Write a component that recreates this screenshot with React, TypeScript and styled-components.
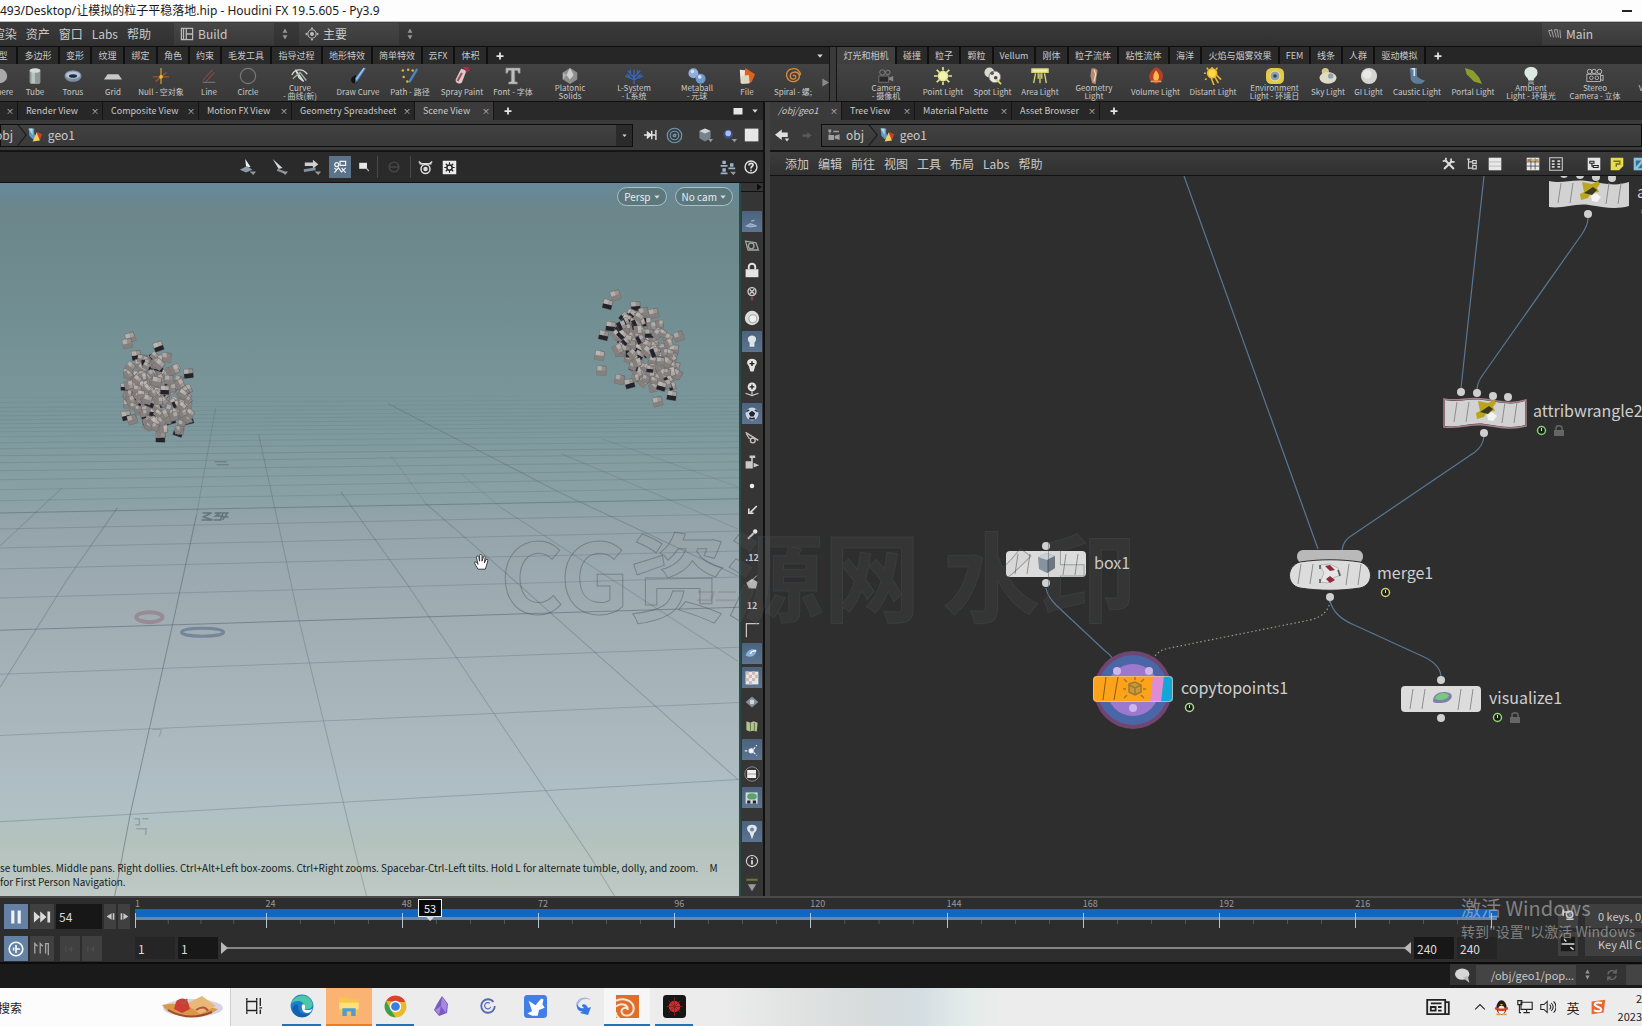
import React from 'react';
import styled, { createGlobalStyle, css } from 'styled-components';

const ui = `"Noto Sans CJK SC", "Noto Sans", sans-serif`;

const Global = createGlobalStyle`
  * { box-sizing: border-box; }
  body { margin: 0; background: #2e2e2e; font-family: ${ui}; color: #c9c9c9; overflow: hidden; }
  button, input, select { font: inherit; color: inherit; border: 0; padding: 0; margin: 0; background: none; border-radius: 0; }
  svg { display: block; flex: none; }
`;

/* ---------- icons ---------- */

type IconProps = { n: string; s?: number };

const W = '#d8d8d8';
const shapes: Record<string, React.ReactNode> = {
  sphere: <circle cx="10" cy="10" r="8" fill="#a9a9a9" />,
  tube: <g><rect x="4" y="2" width="12" height="17" rx="3" fill="#8f9a97" /><rect x="6" y="4" width="4" height="14" fill="#b9c4c0" /><ellipse cx="10" cy="4" rx="6" ry="2.5" fill="#d3dad8" /></g>,
  torus: <g><ellipse cx="10" cy="10" rx="9.500" ry="6.500" fill="#7d8ea3" /><ellipse cx="10" cy="9" rx="8" ry="4" fill="#b4c4d6" /><ellipse cx="10" cy="10" rx="4.500" ry="2" fill="#1f2a3a" /></g>,
  grid: <path d="M4 8h12l4 6H0z" fill="#c8c8c8" />,
  nullobj: <g strokeWidth="1.4"><path d="M10 1v18" stroke="#c9a02c" /><path d="M1 11h18" stroke="#a8522f" /><path d="M4 16L16 6" stroke="#a8522f" /><circle cx="10" cy="11" r="2" fill="#e3be3d" /></g>,
  line: <g fill="none" stroke="#8a4a4a" strokeWidth="1.2"><path d="M3 15L14 3M6 17L16 6" /><path d="M3 17h14" stroke="#777" /></g>,
  circle: <circle cx="10" cy="10" r="8.500" fill="none" stroke="#7b7b7b" strokeWidth="1.200" />,
  curve: <g fill="none" stroke="#d6dcd8" strokeWidth="1.5"><path d="M1 9C4 2 13 1 18 8" /><path d="M5 3l9 13-5-4z" fill="#9db3a8" /><path d="M2 13l8-7 7 9" stroke="#9fb5ab" /></g>,
  draw: <g><path d="M3 12c-2 4 1 7 5 6l3-5-4-4z" fill="#111" /><path d="M19 1l-9 14-3 3 0-6L15 2z" fill="#4d84c4" /><path d="M17 1l-9 13" stroke="#a9cdf1" strokeWidth="1.4" /></g>,
  path: <g><path d="M18 2l-9 15" stroke="#4d84c4" strokeWidth="2.600" /><g fill="#d9b83b"><circle cx="2" cy="4" r="1.4" /><circle cx="8" cy="3" r="1.4" /><circle cx="3" cy="11" r="1.4" /><circle cx="7" cy="16" r="1.4" /><circle cx="13" cy="4" r="1.4" /></g></g>,
  spray: <g><path d="M9 2l6 2-5 13c-2 3-8 1-7-3z" fill="#dfc9cd" /><path d="M9 6l2 1-5 9-2-1z" fill="#a34a58" /><path d="M11 0h6l2 4-4 2z" fill="#a82f47" /></g>,
  font: <path d="M2 1h16v6h-2l-1-3h-3v12l3 1v2H5v-2l3-1V4H5L4 7H2z" fill="#bdbdbd" stroke="#777" strokeWidth=".6" />,
  platonic: <g><path d="M10 1l8 5v8l-8 5-8-5V6z" fill="#8f8f8f" /><path d="M10 1l4 8-4 5-4-5z" fill="#d0d0d0" /><path d="M2 6l4 3-4 5z" fill="#b4b4b4" /></g>,
  lsys: <g stroke="#3765b4" strokeWidth="1.6" fill="none"><path d="M10 19V3M10 12L3 4M10 12l7-8M10 14L0 10M10 14l10-4M6 8V3M14 8V3M2 8l4 3M18 8l-4 3" /></g>,
  meta: <g><circle cx="6" cy="7" r="5.500" fill="#8fb0da" /><circle cx="14" cy="13" r="5.500" fill="#6f9ad0" /><circle cx="5" cy="5" r="2" fill="#d4e4f6" /><circle cx="13" cy="11" r="2" fill="#d4e4f6" /></g>,
  file: <g><path d="M2 3l9 1 1 14H3z" fill="#f1e7d8" /><path d="M8 1l11 7-4 9-8 1z" fill="#e1611f" /><path d="M3 10l9-1 1 9-9 1z" fill="#dcd9c0" /></g>,
  spiral: <path d="M10 10c1-2 4 0 3 2-2 3-7 1-6-3 1-4 8-5 10 0 1 6-6 9-11 6-5-4-4-12 3-13 5-1 9 2 9.500 7" fill="none" stroke="#d98b3d" strokeWidth="1.5" />,
  camera: <g><path d="M2 10h11v7H2z" fill="#2a2a2a" stroke="#777" /><circle cx="6" cy="6" r="3" fill="none" stroke="#888" /><circle cx="12" cy="6" r="2.500" fill="none" stroke="#888" /><path d="M13 12l5-2v6l-5-2" fill="#888" /></g>,
  point: <g stroke="#e6e896" strokeWidth="1.8"><circle cx="10" cy="10" r="5" fill="#f3f4b2" /><path d="M10 0v4M10 16v4M0 10h4M16 10h4M3 3l3 3M14 14l3 3M3 17l3-3M14 6l3-3" /></g>,
  spot: <g><circle cx="6" cy="6" r="5.500" fill="#d9d9cf" /><circle cx="12" cy="11" r="6.500" fill="#e8e8dc" stroke="#777" /><circle cx="9" cy="7" r="2" fill="#555" /><circle cx="13" cy="12" r="2" fill="#444" /><path d="M14 14l5 5" stroke="#d7d86a" strokeWidth="2" /></g>,
  area: <g stroke="#d5d473" strokeWidth="1.500"><path d="M1 2h18v4H1z" fill="#f3efb1" /><path d="M5 7l-2 11M10 7v11M15 7l2 11M8 7v6M12 7v6" /></g>,
  geolight: <g><path d="M7 2c5-2 9 2 6 6l-1 11-4-1-2-8z" fill="#b48a73" /><path d="M10 3l2 5-2 8" stroke="#efd3b8" strokeWidth="1.500" fill="none" /></g>,
  volume: <g><path d="M10 0c7 3 9 9 7 14l-7 5-7-5C1 9 4 4 10 0z" fill="#b5402a" /><path d="M10 4c4 4 4 8 2 11H8c-2-4-1-7 2-11z" fill="#ffb84a" /><path d="M4 15h12v2H4z" fill="#e39b49" /></g>,
  distant: <g stroke="#e9b72c" strokeWidth="1.800"><circle cx="9" cy="7" r="5" fill="#ffd84a" /><path d="M9 0v2M2 7H0M3 1l2 2M15 1l-2 2M3 13l-2 1M8 12l3 8M12 11l4 7M13 8l6 6" /></g>,
  env: <g><rect x="0" y="1" width="20" height="18" rx="6" fill="#e3c94a" /><circle cx="10" cy="10" r="5.500" fill="#8aa0ae" stroke="#f4e9a0" /><circle cx="10" cy="10" r="2" fill="#314556" /></g>,
  sky: <g><circle cx="7" cy="5" r="4" fill="#d9c987" /><ellipse cx="10" cy="12" rx="9.500" ry="6.500" fill="#dedbc8" /><circle cx="13" cy="10" r="3" fill="#8fa2b0" /></g>,
  gi: <g><circle cx="10" cy="10" r="9" fill="#d5d5d1" /><circle cx="8" cy="8" r="5" fill="#e8e8e5" /></g>,
  caustic: <g><path d="M2 1h8v9c3 4 7 4 9 5l-3 3c-7 2-14-1-13-7z" fill="#5f7d9a" /><path d="M4 2h3v8" stroke="#d8e5ef" strokeWidth="1.800" fill="none" /></g>,
  portal: <path d="M1 1l9 3 7 8 3 7-9-3-8-8z" fill="#8d9c2c" />,
  ambient: <g><path d="M10 0c6 0 8 4 7 8-1 3-4 4-4 7H7c0-3-3-4-4-7-1-4 1-8 7-8z" fill="#dbe9e2" /><path d="M7 16h6v3H7z" fill="#888" /></g>,
  stereo: <g fill="none" stroke="#c2c2c2"><rect x="1" y="8" width="15" height="8" fill="#333" /><circle cx="4" cy="5" r="2.500" /><circle cx="9" cy="5" r="2.500" /><circle cx="15" cy="5" r="2.500" /><circle cx="6" cy="12" r="2" /><circle cx="12" cy="12" r="2" /><path d="M16 10l3-1v6l-3-1" /></g>,
  plus: <path d="M10 3v14M3 10h14" stroke="#e6e6e6" strokeWidth="3.500" />,
  down: <path d="M4 7h12l-6 7z" fill={W} />,
  downbig: <path d="M1 5h18l-9 11z" fill={W} />,
  flag: <path d="M5 2v16l12-8z" fill="#0c0c0c" />,
  right: <path d="M3 1v18l15-9z" fill="#8a8a8a" />,
  updown: <path d="M10 1l4 7H6zM10 19l4-7H6z" fill="#969696" />,
  layout: <path d="M2 2h16v16H2zM9 2v16M9 10h9M5 2v16" fill="none" stroke="#b9b9b9" strokeWidth="1.800" />,
  target: <g fill="none" stroke="#bdbdbd" strokeWidth="1.600"><circle cx="10" cy="10" r="6" /><path d="M10 0l2 3H8zM10 20l2-3H8zM0 10l3-2v4zM20 10l-3-2v4z" fill="#bdbdbd" stroke="none" /><circle cx="10" cy="10" r="2" fill="#bdbdbd" /></g>,
  anim: <path d="M1 5l3 9M5 3l3 12M9 4l3 11M13 3l2 12M17 4l1 12M1 5h4M9 4h4" stroke="#a5a5a5" strokeWidth="1.400" fill="none" />,
  geo: <g><path d="M2 2h7v6l3 6-5 1-4-4z" fill="#5d9cc9" /><path d="M2 2h5v8" fill="#b5d7ea" /><path d="M12 6l7 3-3 8-5-1z" fill="#cf3f21" /><path d="M12 7l4 10-9 1z" fill="#f3cf63" /></g>,
  obj: <g fill="#a0a0a0"><path d="M2 2h4v4H2zM9 4h8v2H9zM2 10h8v7H2zM11 11l7-2v8l-7-2z" /><path d="M4 6v4" stroke="#a0a0a0" /></g>,
  pin: <path d="M0 10h10M5 6l5 4-5 4zM11 4v12M11 10h5M17 3v14" fill="#e2e2e2" stroke="#e2e2e2" strokeWidth="2" />,
  rings: <g fill="none" stroke="#7199b1" strokeWidth="1.400"><circle cx="10" cy="10" r="8.500" /><circle cx="10" cy="10" r="5" /><path d="M10 10l2-2" /><circle cx="10" cy="10" r="1.500" /></g>,
  cube: <g><path d="M3 5l7-3 7 3v9l-7 4-7-4z" fill="#76838c" /><path d="M3 5l7-3 7 3-7 3z" fill="#ced6da" /><path d="M14 15h6l-3 4z" fill="#999" /></g>,
  bluedot: <g><circle cx="9" cy="9" r="6" fill="#3d4d85" /><circle cx="9" cy="8" r="3.500" fill="#a9c0ee" /><path d="M13 15h7l-3 4z" fill="#999" /></g>,
  square: <path d="M1 2h17v16H1z" fill="#e6e6e6" />,
  box: <path d="M1 4h18v13H1z" fill="#e6e6e6" />,
  back: <path d="M0 9l9-7v4h8v6H9v4zM13 14h6l-3 4z" fill="#dedede" />,
  fwd: <path d="M18 10l-7-5v3H4v4h7v3z" fill="#5a5a5a" />,
  sel: <g><path d="M8 1l6 9-5 0z" fill="#f0f0f0" /><path d="M2 13l8-4 6 4-7 3z" fill="#8d9aa8" /><path d="M13 15h7l-3 4z" fill="#9a9a9a" /></g>,
  sel2: <g><path d="M3 1l11 10-4 1 2 4z" fill="#d5d8db" /><path d="M8 13l8 3" stroke="#8492a2" strokeWidth="2.500" /><path d="M13 15h7l-3 4z" fill="#9a9a9a" /></g>,
  sel3: <g><path d="M2 5h9V2l6 5-6 5V9H2z" fill="#d0d0d0" /><path d="M1 14l13-2" stroke="#8492a2" strokeWidth="3" /><path d="M13 15h7l-3 4z" fill="#9a9a9a" /></g>,
  snap: <g fill="none" stroke="#f2f2f2" strokeWidth="1.500"><circle cx="6" cy="7" r="2.500" /><path d="M10 3h7v5h-7zM3 17l5-6 4 5 5-5M3 11l3 3M12 11l5 6" /></g>,
  magnet: <g><path d="M2 3h13v10H2z" fill="#e6e6e6" /><path d="M14 12l4 5" stroke="#bbb" strokeWidth="2" /></g>,
  dim: <g fill="none" stroke="#484848" strokeWidth="2"><circle cx="10" cy="10" r="7" /><path d="M3 10h14" /></g>,
  eye: <g fill="none" stroke="#dedede" strokeWidth="2"><circle cx="10" cy="12" r="6" /><circle cx="10" cy="12" r="2" fill="#dedede" /><path d="M1 2l5 4M19 2l-5 4M2 5h16" /></g>,
  gear: <g><path d="M1 1h18v18H1z" fill="#ececec" /><circle cx="10" cy="10" r="3.500" fill="none" stroke="#222" strokeWidth="2" /><path d="M10 3v3M10 14v3M3 10h3M14 10h3M5 5l2 2M15 15l-2-2M5 15l2-2M15 5l-2 2" stroke="#222" strokeWidth="1.500" /></g>,
  people: <g fill="#9fb2cc"><path d="M4 2h4v4H4zM2 7h8v2H2zM4 11h4v4H4zM2 16h8v2H2zM13 5h4v4h-4zM11 10h8v2h-8z" /><path d="M13 15h7l-3 4z" fill="#999" /></g>,
  help: <g fill="none" stroke="#e0e0e0"><circle cx="10" cy="10" r="8.500" strokeWidth="2" /><path d="M7 8c0-4 6-4 6-1 0 2-3 2-3 5M10 14v2" strokeWidth="2.400" /></g>,
  wrench: <g fill="none" stroke="#dcdcdc" strokeWidth="3"><path d="M4 4l13 13M3 17L14 6" /><path d="M1 6l4-1 1-4M13 2v5h5" strokeWidth="2.400" /></g>,
  tree: <path d="M5 2v15M5 7h5M5 16h5M3 3h4M11 5h5v4h-5zM11 12h5v5h-5z" stroke="#d4d4d4" fill="none" strokeWidth="1.700" />,
  list: <g><path d="M1 1h18v18H1z" fill="#e8e8e8" /><path d="M1 7h18M1 13h18" stroke="#aaa" /></g>,
  palette: <g><path d="M1 1h18v18H1z" fill="#e8e8e8" /><path d="M2 3h4v3H2z" fill="#d9643c" /><path d="M8 3h4v3H8z" fill="#d8bf38" /><path d="M14 3h4v3h-4z" fill="#de8a3a" /><path d="M7 2v16M13 2v16M1 7h18M1 13h18" stroke="#333" /></g>,
  table: <g fill="none" stroke="#cfcfcf" strokeWidth="1.500"><path d="M1 1h18v18H1z" /><path d="M4 6h4M4 10h4M4 14h4M12 6h4M12 10h4M12 14h4" strokeWidth="2.500" /></g>,
  netbox: <g><path d="M1 1h18v18H1z" fill="#e5e5e5" /><path d="M4 6h6v3H4zM9 12h7v3H9zM7 9v4h2" fill="none" stroke="#222" strokeWidth="1.500" /></g>,
  note: <g><path d="M1 1h18v12l-6 6H1z" fill="#e8dc4d" /><path d="M5 6h9v4H9v4" stroke="#6e6a26" strokeWidth="2" fill="none" /></g>,
  image: <g><path d="M1 1h18v18H1z" fill="#8cc3e3" /><path d="M4 5h8l-8 9zM14 8v8H7z" fill="#3b6d8d" /></g>,
  lens: <g fill="none" stroke="#9fa5a0" strokeWidth="1.600"><path d="M2 4l13 2 3 9-13 0z" /><circle cx="9" cy="10" r="3.500" /></g>,
  handle: <g fill="none" stroke="#9fb4ca" strokeWidth="1.500"><path d="M3 15l5-3 8 3-8 1z" fill="#88a2bd" /><path d="M9 9l4-1" /></g>,
  lock: <g><path d="M2 9h16v10H2z" fill="#e4e4e4" /><path d="M6 9V6c0-5 8-5 8 0v3" fill="none" stroke="#e4e4e4" strokeWidth="2.400" /></g>,
  nolight: <g fill="none" stroke="#c9c9c9" strokeWidth="1.800"><circle cx="10" cy="7" r="5" /><path d="M7 4l6 6M13 4l-6 6" /><path d="M10 13v5" stroke="#7d4541" strokeWidth="3" /></g>,
  disc: <g><circle cx="10" cy="10" r="9" fill="#d9ded9" /><circle cx="11" cy="11" r="5" fill="#eef1ee" stroke="#8b9690" /></g>,
  bulb: <path d="M10 2c5 0 7 5 3 9v5H7v-5C3 7 5 2 10 2z" fill="#dce6e8" />,
  bulbplus: <g><path d="M10 1c6 0 8 5 4 9l-2 7H8l-2-7C2 6 4 1 10 1z" fill="#e4e4dc" /><path d="M10 4v6M7 7h6" stroke="#222" strokeWidth="1.800" /></g>,
  bulbpath: <g><circle cx="10" cy="6" r="5.500" fill="#e4e4e4" /><path d="M10 3v6M7 6h6" stroke="#222" strokeWidth="1.600" /><path d="M10 11v5M2 14l8 3 8-3" stroke="#ccc" strokeWidth="1.500" fill="none" /></g>,
  ball: <g><circle cx="10" cy="10" r="8" fill="#cdd5e2" /><path d="M10 6l4 3-2 4H8L6 9zM2 8l3-4 2 2zM18 8l-3-4-2 2zM6 17l1-3 3 1 3-1 1 3z" fill="#1d2638" /></g>,
  cut: <g stroke="#c9c4bd" strokeWidth="1.600" fill="none"><path d="M2 3l16 10M3 5l4 6" /><circle cx="11" cy="13" r="3" /></g>,
  robot: <g fill="#c9c9c9"><path d="M2 9h9v9H2zM7 2h7v3H7zM9 5h2v4H9z" /><path d="M12 11l7 3-7 3z" /></g>,
  dot: <circle cx="10" cy="10" r="2.800" fill="#eee" />,
  arrowdl: <path d="M16 5L8 13M6 8v6h6" stroke="#e0e0e0" strokeWidth="2" fill="none" />,
  probe: <g><path d="M5 16l7-7" stroke="#c4c4c4" strokeWidth="2.400" /><circle cx="14" cy="7" r="2.800" fill="#e6e6e6" /></g>,
  poly: <g><path d="M3 11l7-5 7 4-2 8H6z" fill="#b5b5b5" /><path d="M8 10l8-8" stroke="#ddd" /></g>,
  corner: <path d="M3 19V2h16" stroke="#c8c8c8" strokeWidth="1.500" fill="none" />,
  shade: <g><path d="M2 12c2-8 9-9 14-7-1 6-6 11-14 7z" fill="#86b4dd" /><path d="M8 10c2-4 5-4 7-4" stroke="#fff" strokeWidth="2" /></g>,
  check: <g><path d="M2 2h16v16H2z" fill="#e8e8e8" /><path d="M2 2h4v4H2zM10 2h4v4h-4zM6 6h4v4H6zM14 6h4v4h-4zM2 10h4v4H2zM10 10h4v4h-4zM6 14h4v4H6z" fill="#cdb9b5" /></g>,
  diamond: <g><path d="M10 3l8 7-8 7-8-7z" fill="#848d93" /><circle cx="10" cy="10" r="3" fill="#ced7dd" /></g>,
  cloth: <g><path d="M3 4l5 2 4-2 5 2-1 11-5-1-4 1-4-2z" fill="#b0c391" /><path d="M8 6v10M13 6v10" stroke="#56653f" /></g>,
  nodes: <g stroke="#e8edf4" strokeWidth="1.600" fill="none"><circle cx="9" cy="11" r="2.500" fill="#fff" /><path d="M12 9l4-5M12 13l4 4M1 11h4" strokeDasharray="3 2" /></g>,
  film: <g><circle cx="10" cy="10" r="9" fill="none" stroke="#999" /><path d="M4 5h11v10H4z" fill="#f0f0f0" /><path d="M5 10h10" stroke="#888" /></g>,
  scene: <g><path d="M2 3h15v14H2z" fill="#d5dcdd" /><ellipse cx="10" cy="8" rx="6" ry="4" fill="#5ba36a" /><path d="M4 13h4v4H4zM11 13h4v4h-4z" fill="#223" /></g>,
  marker: <g><path d="M10 1c7 0 8 6 3 10l-3 8-3-8C2 7 3 1 10 1z" fill="#dfe6ea" /><circle cx="10" cy="7" r="2.500" fill="#6b87a8" /></g>,
  info: <g fill="none" stroke="#e0e0e0"><circle cx="10" cy="10" r="8" strokeWidth="1.500" /><path d="M10 5v2M10 9v6" strokeWidth="2.500" /></g>,
  more: <g><path d="M2 1h16v3H2z" fill="#6f7a24" /><path d="M4 9h12l-6 10z" fill="#9a9a9a" /></g>,
  pause: <path d="M4 2h4v16H4zM12 2h4v16h-4z" fill="#eef1f6" />,
  next: <path d="M1 4l7 6-7 6zM8 4l7 6-7 6zM16 4h3v12h-3z" fill="#dadada" />,
  stepb: <path d="M12 4v12L3 10zM14 4h3v12h-3z" fill="#c8c8c8" />,
  stepf: <path d="M8 4v12l9-6zM3 4h3v12H3z" fill="#c8c8c8" />,
  clock: <g fill="none" stroke="#fff"><circle cx="10" cy="10" r="8.500" strokeWidth="2" /><path d="M10 5v10M10 10h5M7 8v4" strokeWidth="2" /></g>,
  keys: <path d="M2 15V4l3 3M8 15V4l3 3M14 15V4h3v13" stroke="#a8a8a8" fill="none" strokeWidth="1.400" />,
  keydim: <path d="M4 6v8M8 10h6M12 6v8" stroke="#4c4c4c" fill="none" strokeWidth="2" />,
  bubble: <g><ellipse cx="9" cy="9" rx="9" ry="7" fill="#d6d6d6" /><path d="M10 13l8 7-2-9z" fill="#bbb" /></g>,
  refresh: <path d="M4 9c1-6 10-7 12-2M16 2v5h-5M16 11c-1 6-10 7-12 2M4 18v-5h5" fill="none" stroke="#6a6a6a" strokeWidth="1.800" />,
  scope: <g><path d="M1 1h18v18H1z" fill="#191919" /><path d="M2 10h16M5 4l3 3M13 14l4 3" stroke="#ddd" strokeWidth="1.800" /></g>,
  keyset: <g fill="none" stroke="#ccc" strokeWidth="2"><path d="M3 5h9M4 2v8M8 14h9" /><circle cx="12" cy="8" r="4" /></g>,
  taskview: <path d="M2 5h11v10H2zM2 1v3M13 1v3M2 16v3M13 16v3M17 1v9M17 14v5M16 12h3" fill="none" stroke="#222" strokeWidth="1.500" />,
  edge: <g><circle cx="10" cy="10" r="9.500" fill="#1b7fce" /><path d="M1 8C3 1 14-2 18 6c3 6-4 8-7 6 2-3-1-7-5-6-3 0-5 2-5 2z" fill="#4cc6a5" /><path d="M7 10c-1 6 5 8 10 6-5 6-15 3-15-4 1-4 5-4 5-2z" fill="#1460ad" /><path d="M10 9c3-1 3 2 2 4 3 1 6 0 7-1l-2 3c-4 2-8 0-7-6z" fill="#fff" /></g>,
  folder: <g><path d="M1 2h7l2 2h8v14H1z" fill="#f5c748" /><path d="M1 7h18v6H1z" fill="#ffdf7e" /><path d="M4 19v-7h12v7h-4v-4H8v4z" fill="#4f9bd3" /></g>,
  chrome: <g><circle cx="10" cy="10" r="9.500" fill="#e8b92a" /><path d="M2 5a9.500 9.500 0 0 1 16.500 1H10z" fill="#d8432f" /><path d="M1.800 5.200L6 13l4 6.400A9.500 9.500 0 0 1 1.800 5.200z" fill="#36a155" /><circle cx="10" cy="10" r="5" fill="#fff" /><circle cx="10" cy="10" r="3.800" fill="#3c7ee0" /></g>,
  gem: <g><path d="M11 0l6 8-1 9-8 3-5-6 3-6z" fill="#7a5bc0" /><path d="M11 1l-1 9 5 7 1-9zM4 14l6-4-2 9z" fill="#a58ae0" /></g>,
  cring: <g fill="none" stroke="#5568b4"><circle cx="10" cy="10" r="7.500" strokeWidth="2" strokeDasharray="42 5" /><path d="M12 7a3.500 3.500 0 1 0 1 4" strokeWidth="1.300" /></g>,
  bird: <g><rect x="0" y="0" width="20" height="20" rx="3" fill="#3f7fe6" /><path d="M4 5l6 4 5-6 2 1-1 4 2 3-5 2-1 5-5 0-4-2 4-2z" fill="#fff" /></g>,
  swirl: <g><path d="M18 4C12-1 3 2 3 10l2 1C5 5 11 1 18 4z" fill="#a9b9e6" /><path d="M4 8c-1 6 3 8 6 7l-3 2 8 2 3-8-3 1c-1-4-6-5-6-2l2 2c-3 1-6-1-7-4z" fill="#3877df" /></g>,
  houdini: <g><path d="M0 0h20v20H0z" fill="#dd6f2a" /><path d="M0 5c9-4 17 2 15 9-2 5-9 5-10 1-1-3 3-5 5-3M0 10c5-4 11-1 10 3M0 15c0 2 1 4 3 5" fill="none" stroke="#f6e3d3" strokeWidth="1.800" /></g>,
  rec: <g><rect width="20" height="20" rx="3" fill="#161616" /><circle cx="10" cy="10" r="5" fill="#d62a2e" /><path d="M10 2v16M3 10h14M5 5l10 10M15 5L5 15" stroke="#8d2023" strokeWidth=".8" /></g>,
  news: <g fill="none" stroke="#222" strokeWidth="1.500"><path d="M1 4h15v12H1zM16 6h3v10h-3M4 7h9M10 10h3M10 13h3" /><path d="M4 10h4v3H4z" /></g>,
  chevup: <path d="M2 14l8-8 8 8" fill="none" stroke="#222" strokeWidth="1.800" />,
  penguin: <g><ellipse cx="10" cy="10" rx="6" ry="8.500" fill="#2a1b18" /><ellipse cx="10" cy="13" rx="4" ry="5" fill="#f2efe9" /><path d="M3 9c4 3 10 3 14 0l1 3c-5 3-11 3-16 0z" fill="#d3432b" /><path d="M4 17h5v2H4zM11 17h5v2h-5zM8 6h4l-2 2z" fill="#eda12b" /></g>,
  monitor: <path d="M5 4h14v9H5zM12 13v4M8 17h8M1 2h5v5H1zM3 7v10h2" fill="none" stroke="#222" strokeWidth="1.400" />,
  speaker: <path d="M1 7h4l4-4v14l-4-4H1zM12 7c2 2 2 4 0 6M14 5c3 3 3 7 0 10M17 3c4 4 4 10 0 14" fill="none" stroke="#222" strokeWidth="1.300" />,
  sogou: <g><path d="M2 3l17-2-2 16-15 2z" fill="#e7672d" /><path d="M15 5c-4-1-9-1-9 2s8 3 8 6-6 3-9 1" fill="none" stroke="#fff" strokeWidth="2.600" /></g>,
  hand: <path d="M5 19c-2-4-5-7-4-9 1-1 3 1 4 3L3 4c0-2 2-2 3 0l1 5V2c0-2 2-2 3 0l0 7 2-6c1-1 2-1 2 1l-1 7 2-4c2-1 3 0 2 2-1 5-2 7-3 10z" fill="#fff" stroke="#333" strokeWidth="1.200" />,
};

const Icon = ({ n, s = 16 }: IconProps) => (
  <svg width={s} height={s} viewBox="0 0 20 20" aria-hidden="true">{shapes[n]}</svg>
);

/* ---------- frame ---------- */

const Page = styled.div`
  position: relative;
  display: flex;
  flex-direction: column;
  height: 100vh;
  overflow: hidden;
`;
const TitleBar = styled.header`
  display: flex;
  justify-content: space-between;
  align-items: center;
  height: 22px;
  padding-right: 10px;
  background: #fdfdfd;
  border-bottom: 1px solid #bdbdbd;
  color: #1b1b1b;
  font: 12px/20px "Noto Sans", "Noto Sans CJK SC", sans-serif;
  white-space: nowrap;
`;
const MinButton = styled.button`
  width: 10px;
  height: 2px;
  background: #222;
`;
const MenuBar = styled.nav`
  display: flex;
  align-items: center;
  height: 25px;
  background: linear-gradient(#3b3b3b, #303030);
  border-bottom: 1px solid #0d0d0d;
  font-size: 12px;
`;
const CutMenu = styled.div`
  display: flex;
  justify-content: flex-end;
  width: 151px;
  gap: 9px;
  white-space: nowrap;
`;
const MenuButton = styled.button`
  flex: none;
  line-height: 18px;
  white-space: nowrap;
`;
const DeskPicker = styled.label<{ w: number }>`
  display: flex;
  align-items: center;
  gap: 4px;
  width: ${p => p.w}px;
  height: 22px;
  padding: 0 6px;
  background: linear-gradient(#474747, #393939);
`;
const PickSelect = styled.select`
  appearance: none;
  flex: 1;
  min-width: 0;
  outline: 0;
  line-height: 18px;
`;
const Gap = styled.span<{ w?: number }>`
  flex: ${p => (p.w ? `0 0 ${p.w}px` : '1')};
`;

/* ---------- shelves ---------- */

const Shelves = styled.div`
  display: grid;
  grid-template-columns: minmax(0, 829fr) 8px minmax(0, 805fr);
  height: 55px;
  border-bottom: 1px solid #111;
  background: #222;
`;
const Shelf = styled.section`
  display: flex;
  flex-direction: column;
  overflow: hidden;
`;
const ShelfTabs = styled.div<{ $start: number }>`
  display: flex;
  align-items: center;
  height: 17px;
  margin-left: ${p => Math.min(p.$start, 0)}px;
  background: #262626;
  font-size: 9px;
`;
const ShelfTab = styled.button<{ w: number; $on?: boolean }>`
  flex: 0 0 ${p => p.w}px;
  height: 17px;
  line-height: 17px;
  display: flex;
  justify-content: center;
  white-space: nowrap;
  border-right: 2px solid #101010;
  background: ${p => (p.$on ? '#3f3f3f' : '#2a2a2a')};
`;
const ShelfTools = styled.div<{ $start: number }>`
  display: flex;
  flex: 1;
  background: linear-gradient(#434343, #383838);
  padding-left: ${p => Math.max(p.$start, 0)}px;
  margin-left: ${p => Math.min(p.$start, 0)}px;
`;
const Tool = styled.button<{ w: number }>`
  flex: 0 0 ${p => p.w}px;
  min-width: 0;
  display: flex;
  flex-direction: column;
  align-items: center;
  padding-top: 3px;
`;
const ToolName = styled.span`
  display: flex;
  align-items: center;
  height: 18px;
  margin-top: -2px;
  font-size: 8px;
  line-height: 8px;
  text-align: center;
  white-space: pre;
`;
const MoreTools = styled.button`
  align-self: center;
`;
const Grip = styled.div`
  background: #3a3a3a;
  border: 1px solid #151515;
  border-width: 0 1px;
`;

const leftTabs: [string, number][] = [['模型', 37], ['多边形', 42], ['变形', 32], ['纹理', 33], ['绑定', 33], ['角色', 32], ['约束', 32], ['毛发工具', 50], ['指导过程', 51], ['地形特效', 50], ['简单特效', 50], ['云FX', 32], ['体积', 33]];
const rightTabs: [string, number][] = [['灯光和相机', 60], ['碰撞', 32], ['粒子', 32], ['颗粒', 33], ['Vellum', 42], ['刚体', 33], ['粒子流体', 50], ['粘性流体', 51], ['海洋', 32], ['火焰与烟雾效果', 78], ['FEM', 31], ['线条', 32], ['人群', 32], ['驱动模拟', 51]];
const leftTools: [string, string, number][] = [
  ['Sphere', 'sphere', 38], ['Tube', 'tube', 32], ['Torus', 'torus', 44], ['Grid', 'grid', 36], ['Null - 空对象', 'nullobj', 60], ['Line', 'line', 36], ['Circle', 'circle', 42],
  ['Curve\n- 曲线(新)', 'curve', 62], ['Draw Curve', 'draw', 54], ['Path - 路径', 'path', 50], ['Spray Paint', 'spray', 54], ['Font - 字体', 'font', 48], ['Platonic\nSolids', 'platonic', 66],
  ['L-System\n- L系统', 'lsys', 62], ['Metaball\n- 元球', 'meta', 64], ['File', 'file', 36], ['Spiral - 螺;', 'spiral', 56],
];
const rightTools: [string, string, number][] = [
  ['Camera\n- 摄像机', 'camera', 54], ['Point Light', 'point', 60], ['Spot Light', 'spot', 39], ['Area Light', 'area', 56], ['Geometry\nLight', 'geolight', 52], ['Volume Light', 'volume', 71],
  ['Distant Light', 'distant', 44], ['Environment\nLight - 环境日', 'env', 79], ['Sky Light', 'sky', 28], ['GI Light', 'gi', 53], ['Caustic Light', 'caustic', 44], ['Portal Light', 'portal', 68],
  ['Ambient\nLight - 环境光', 'ambient', 48], ['Stereo\nCamera - 立体', 'stereo', 80], ['VR Cam\n- VR', 'camera', 36],
];

/* ---------- panes ---------- */

const Panes = styled.main`
  flex: 1;
  min-height: 0;
  display: grid;
  grid-template-columns: minmax(0, 763fr) 7px minmax(0, 872fr);
  background: #353535;
`;
const Pane = styled.section`
  position: relative;
  display: flex;
  flex-direction: column;
  min-height: 0;
  min-width: 0;
  overflow: hidden;
`;
const Splitter = styled.div`
  background: #414141;
  border-left: 2px solid #111;
`;
const PaneTabs = styled.div`
  display: flex;
  align-items: center;
  height: 18px;
  background: #292929;
  font-size: 9px;
`;
const PaneTab = styled.div<{ w: number; $on?: boolean; $cut?: boolean }>`
  flex: 0 0 ${p => p.w}px;
  display: flex;
  justify-content: space-between;
  align-items: center;
  height: 18px;
  padding: 0 6px 0 ${p => (p.$cut ? 6 : 8)}px;
  border-right: 1px solid #141414;
  background: ${p => (p.$on ? '#3b3b3b' : '#272727')};
`;
const TabName = styled.button<{ $it?: boolean }>`
  line-height: 18px;
  white-space: nowrap;
  font-style: ${p => (p.$it ? 'italic' : 'normal')};
`;
const CloseX = styled.button`
  width: 5px;
  font-size: 8px;
  line-height: 12px;
`;
const PathBar = styled.div`
  display: flex;
  align-items: center;
  height: 32px;
  background: #3a3a3a;
  border-bottom: 2px solid #141414;
  font-size: 12px;
`;
const PathField = styled.div`
  flex: 1;
  display: flex;
  align-items: center;
  height: 23px;
  border: 1px solid #0e0e0e;
  background: linear-gradient(#414141, #393939);
`;
const PathPart = styled.button<{ w: number }>`
  display: flex;
  align-items: center;
  gap: 5px;
  width: ${p => p.w}px;
  line-height: 18px;
  justify-content: flex-end;
`;
const Chevron = styled.span`
  width: 10px;
  height: 21px;
  margin: 0 6px 0 4px;
  background: #1b1b1b;
  clip-path: polygon(0 0, 15% 0, 100% 50%, 15% 100%, 0 100%, 85% 50%);
`;
const DropBox = styled.button`
  display: grid;
  place-items: center;
  width: 16px;
  height: 21px;
  background: #2a2a2a;
`;
const IconCell = styled.button<{ w: number; $on?: boolean }>`
  display: grid;
  place-items: center;
  flex: 0 0 ${p => p.w}px;
  height: 22px;
  background: ${p => (p.$on ? '#5b728b' : 'none')};
`;
const ViewTools = styled.div`
  display: flex;
  align-items: center;
  height: 31px;
  background: #2a2a2a;
  border-bottom: 1px solid #111;
`;
const Sep = styled.span`
  width: 1px;
  height: 22px;
  background: #4a4a4a;
`;
const NetMenu = styled.nav`
  display: flex;
  align-items: center;
  height: 24px;
  gap: 9px;
  padding-left: 15px;
  margin-right: -5px;
  background: linear-gradient(#3c3c3c, #303030);
  border-bottom: 1px solid #111;
  font-size: 12px;
  overflow: hidden;
`;

/* ---------- scene view ---------- */

const SceneRow = styled.div`
  flex: 1;
  min-height: 0;
  display: flex;
`;
const Scene = styled.div`
  position: relative;
  flex: 1;
  min-width: 0;
  overflow: hidden;
  background: linear-gradient(#66899a 0%, #6c868b 4%, #718e93 18%, #7b979b 32%, #8aa2a6 45%, #94a3aa 47%, #9fadb3 60%, #adbbc1 80%, #b0c0c5 88%, #b4c2bd 92%, #bfc9c5 100%);
  > svg { position: absolute; inset: 0; width: 100%; height: 100%; }
`;
const CamMenus = styled.div`
  position: absolute;
  top: 4px;
  right: 6px;
  display: flex;
  gap: 8px;
`;
const CamButton = styled.button`
  display: flex;
  align-items: center;
  gap: 3px;
  height: 19px;
  padding: 0 6px;
  border: 1px solid #a9c0c4;
  border-radius: 10px;
  background: #5d787d;
  color: #e6eeee;
  font-size: 10px;
  line-height: 17px;
`;
const Hint = styled.p`
  position: absolute;
  left: 0;
  bottom: 7px;
  margin: 0;
  font-size: 10px;
  line-height: 14px;
  color: #141c1c;
  white-space: pre;
`;
const Cursor = styled.span`
  position: absolute;
  left: 474px;
  top: 371px;
`;
const SideBar = styled.div`
  display: flex;
  flex-direction: column;
  align-items: center;
  flex: 0 0 24px;
  background: #353535;
  border-left: 2px solid #2c4a45;
  overflow: hidden;
`;
const SideTop = styled.button`
  flex: none;
  display: flex;
  justify-content: flex-end;
  align-items: center;
  width: 100%;
  height: 9px;
  margin-bottom: 18px;
  border-bottom: 1px solid #111;
`;
const SideButton = styled.button<{ $on?: boolean; $gap?: number }>`
  flex: none;
  display: grid;
  place-items: center;
  width: 20px;
  height: 21px;
  margin: ${p => p.$gap ?? 1}px 0 2px;
  font-size: 9px;
  font-weight: 700;
  line-height: 12px;
  ${p => p.$on && css`background: linear-gradient(#4c637e, #5b748f);`}
`;

const rnd = (seed: number) => () => {
  seed = (seed * 16807) % 2147483647;
  return seed / 2147483647;
};

type Cube = { x: number; y: number; a: number; s: number; d: boolean };
const cluster = (seed: number, cx: number, cy: number, rx: number, ry: number, n: number, tilt: number, dark: number, extra: [number, number][]): Cube[] => {
  const r = rnd(seed);
  const out: Cube[] = extra.map(([x, y]) => ({ x, y, a: r() * 40 - 20, s: 9, d: r() > 0.4 }));
  for (let i = 0; i < n; i++) {
    const t = r() * 6.283;
    const k = Math.sqrt(r()) * (0.85 + r() * 0.3);
    const dx = Math.cos(t) * k * rx;
    out.push({ x: cx + dx, y: cy + Math.sin(t) * k * ry + dx * tilt, a: r() * 90, s: 6 + r() * 3, d: r() < dark });
  }
  return out;
};
const tones = ['#a39e9a', '#928f8d', '#aeaaa6', '#868484', '#9b9591'];
const cubes = [
  ...cluster(77, 157, 211, 32, 35, 200, 0.3, 0.14, [[130, 154], [127, 160], [158, 163], [166, 174], [136, 172], [160, 254], [178, 248], [170, 236], [142, 176], [128, 190], [126, 232], [188, 190], [188, 236], [132, 236]]),
  ...cluster(913, 644, 167, 31, 32, 180, 0.5, 0.26, [[614, 112], [606, 121], [634, 123], [630, 131], [642, 129], [652, 130], [609, 143], [602, 152], [598, 172], [677, 153], [656, 218], [670, 212], [600, 187], [620, 146], [618, 196], [628, 200], [672, 166]]),
];

const rows: [number, number, number][] = [
  [637, 595, 0.3], [551, 518, 0.28], [490, 463, 0.28], [446, 423, 0.5], [414, 393, 0.26], [385, 367, 0.26], [364, 347, 0.26], [345, 330, 0.26], [329, 315, 0.45],
  [317, 304, 0.2], [306, 294, 0.2], [296, 286, 0.2], [287, 278, 0.2], [279, 270, 0.2], [272, 264, 0.22], [265, 258, 0.18], [259, 252, 0.16], [253, 247, 0.15], [248, 243, 0.15], [244, 239, 0.14], [240, 235, 0.14], [236, 231, 0.12], [232, 228, 0.12], [228, 224, 0.1], [224, 220, 0.1], [219, 216, 0.08], [214, 212, 0.06],
];
const rails: [string, number][] = [
  ['M215 225L196 331', 0.25],
  ['M196 331L172 441 130 629 114 713', 0.5],
  ['M0 503L33 450 66 397 117 324', 0.35],
  ['M0 362L62 304', 0.25],
  ['M258 251L274 324 298 435 356 674 366 713', 0.32],
  ['M340 308L406 400 590 674 614 713', 0.32],
  ['M425 320L500 385 736 595', 0.32],
  ['M500 324L736 477', 0.25],
  ['M387 220L557 308 736 392', 0.35],
  ['M390 272L425 320', 0.15],
  ['M460 290L500 324', 0.15],
  ['M560 270L736 345', 0.2],
  ['M600 255L736 303', 0.16],
];

const SceneDrawing = () => (
  <svg viewBox="0 0 737 713" preserveAspectRatio="xMinYMin slice" aria-hidden="true">
    <g fill="none" stroke="#4d5c68">
      {rows.map(([a, b, o]) => <path key={a} d={`M0 ${a}L737 ${b}`} strokeOpacity={o} />)}
      {rails.map(([d, o]) => <path key={d} d={d} strokeOpacity={o} />)}
    </g>
    <g fill="none">
      <ellipse cx="149" cy="433" rx="13" ry="5" stroke="#93707c" strokeWidth="4" opacity=".55" />
      <ellipse cx="202" cy="448" rx="21" ry="4" stroke="#5a6a88" strokeWidth="3" opacity=".6" />
      <path d="M201 336h11l-9-3 8-4h-9M214 329h6l-5 3h6l-1 4h-7M222 336l5-7h-5v4h6" stroke="#4f6066" strokeWidth="1.500" opacity=".7" />
      <path d="M214 278h12M216 281h12" stroke="#4f6066" opacity=".6" />
      <path d="M134 634h5v6h-4M142 634h6M136 644h10l-1 6" stroke="#70839a" strokeWidth="1.500" opacity=".5" />
      <path d="M152 545h9l-2 7" stroke="#70839a" opacity=".5" />
      <path d="M696 408h16l-3 8h-14M716 408h18M714 416h20" stroke="#93707c" strokeWidth="2" opacity=".35" />
    </g>
    {cubes.map((c, i) => {
      const h = c.s / 2;
      return (
        <g key={i} transform={`translate(${c.x} ${c.y}) rotate(${c.a})`}>
          <path d={`M${-h} ${-h}h${c.s}v${c.s}h${-c.s}z`} fill={tones[i % 5]} stroke="#666262" strokeWidth=".6" />
          <path d={`M${-h} ${h}h${c.s}v${-h}h${-c.s}z`} fill={c.d ? '#23232c' : '#85807d'} />
          <path d={`M${-h} ${-h}h${h}v${h}h${-h}z`} fill="#c4c0bd" fillOpacity=".6" />
        </g>
      );
    })}
  </svg>
);

const sideIcons: [string, boolean?][] = [
  ['handle', true], ['lens'], ['lock'], ['nolight'], ['disc'], ['bulb', true], ['bulbplus'], ['bulbpath'], ['ball', true], ['cut'], ['robot'], ['dot'], ['arrowdl'],
  ['probe'], ['.12'], ['poly'], ['12'], ['corner'], ['shade', true], ['check', true], ['diamond'], ['cloth'], ['nodes', true], ['film'], ['scene', true],
];

/* ---------- network ---------- */

const Network = styled.div`
  position: relative;
  flex: 1;
  min-height: 0;
  overflow: hidden;
  background: #2e2e2e;
`;
const Wires = styled.svg`
  position: absolute;
  left: 0;
  top: 0;
`;
const NodeBox = styled.div<{ $x: number; $y: number }>`
  position: absolute;
  left: ${p => p.$x}px;
  top: ${p => p.$y}px;
  display: flex;
  align-items: center;
  height: 26px;
  gap: 8px;
  color: #cfcfcf;
  font-size: 16px;
  line-height: 24px;
`;
const NodeBody = styled.svg`
  overflow: visible;
`;
const NodeText = styled.div`
  position: relative;
  margin-bottom: 4px;
`;
const Badges = styled.div`
  position: absolute;
  left: 3px;
  top: 27px;
  display: flex;
  align-items: center;
  gap: 7px;
`;

type NodeKind = 'flat' | 'wave' | 'merge' | 'copy';
type NodeDef = { name: string; x: number; y: number; kind: NodeKind; icon: string; ring?: string; lock?: boolean; sel?: boolean; top: [number, number][]; bottom: [number, number] };
const nodes: NodeDef[] = [
  { name: 'attribwrangle1', x: 779, y: 4, kind: 'wave', icon: 'python', ring: '#555', lock: true, top: [[15, -6], [31, -5], [47, -3], [63, -2]], bottom: [39, 34] },
  { name: 'attribwrangle2', x: 675, y: 223, kind: 'wave', icon: 'python', ring: '#7ed36a', lock: true, sel: true, top: [[16, -7], [32, -6], [48, -3], [63, -2]], bottom: [39, 34] },
  { name: 'merge1', x: 519, y: 385, kind: 'merge', icon: 'merge', ring: '#c9cf6a', top: [], bottom: [41, 36] },
  { name: 'box1', x: 236, y: 375, kind: 'flat', icon: 'box', top: [[40, -5]], bottom: [40, 32] },
  { name: 'copytopoints1', x: 323, y: 500, kind: 'copy', icon: 'copy', ring: '#a6e08c', top: [[24, -5], [56, -5]], bottom: [40, 32] },
  { name: 'visualize1', x: 631, y: 510, kind: 'flat', icon: 'vis', ring: '#8fd86a', lock: true, top: [[40, -6]], bottom: [40, 32] },
];

const nodeArt: Record<string, React.ReactNode> = {
  python: <g><path d="M33 2l10 2 6-3 2 3-3 4 2 4-8 1-3 5-7 2-1-6 4-2z" fill="#b9a51f" /><path d="M35 13l9-6 4 3-5 5z" fill="#3c3a1c" /><path d="M42 16l5-3 5 4-4 5-5-1z" fill="#f4f4f4" /></g>,
  merge: <g fill="none"><path d="M31 4l4 8-4 9 8 1 5-5 8-3-3-7-8-4z" fill="#e6e6e6" stroke="#aaa" strokeWidth=".8" /><path d="M36 5l5-1 5 5-5 1zM37 18l4-3 5 4-5 3z" fill="#8d2c38" /><path d="M31 4v4M31 18v4M49 9l2 6" stroke="#555" strokeWidth="1.500" /></g>,
  box: <g><path d="M32 6l8-4 9 3v12l-8 5-8-4z" fill="#8794a0" /><path d="M32 6l8-4 9 3-8 4z" fill="#c8d0d6" /><path d="M41 9l8-4v12l-8 5z" fill="#69757f" /></g>,
  copy: <g fill="none" stroke="#a0792f" strokeWidth="1.500"><path d="M36 8l6-2 6 3v7l-6 3-6-3z" fill="#c99a3c" /><path d="M36 9l6 3 6-3M42 12v7" /><path d="M31 3l3 3M51 3l-3 3M31 22l3-3M51 22l-3-3M42 1v3M30 13h3M50 13h3" /></g>,
  vis: <g><path d="M32 15c0-9 12-11 18-7 3 4-3 9-10 9-5 0-8 0-8-2z" fill="#7d80a8" /><path d="M34 13c1-6 10-8 14-4-1 5-9 6-14 4z" fill="#79c97c" /></g>,
};

const NodeView = ({ d }: { d: NodeDef }) => {
  const h = 26;
  const wave = 'M0 1C14 4 22-1 38 1S66 7 80 2V26C66 30 54 27 40 25S14 29 0 27z';
  const body =
    d.kind === 'wave' ? <path d={wave} fill="#d2d2d2" /> :
    d.kind === 'merge' ? <g><rect x="8" y="-11" width="66" height="13" rx="6" fill="#b9b9b9" /><path d="M11 1C31-2 51-2 71 1 85 5 85 24 71 27 51 30 31 30 11 27-3 24-3 5 11 1z" fill="#dcdcdc" stroke="#2e2e2e" /></g> :
    d.kind === 'copy' ? (
      <g>
        <circle cx="40" cy="14" r="39" fill="#70456f" /><circle cx="40" cy="14" r="35" fill="#4a66a6" /><circle cx="40" cy="14" r="26" fill="#9c78cf" />
        <rect width="80" height="26" rx="4" fill="#fca31a" /><path d="M60 0h11l-3 26H57z" fill="#e08bd6" /><path d="M71 0h5q4 0 4 4v18q0 4-4 4h-8z" fill="#12a5dc" />
        <rect x=".5" y=".5" width="79" height="25" rx="4" fill="none" stroke="#e8c9a0" strokeOpacity=".7" />
      </g>
    ) : <rect width="80" height="26" rx="4" fill="#dcdcdc" />;
  return (
    <NodeBox $x={d.x} $y={d.y}>
      <NodeBody width="80" height={h} viewBox={`0 0 80 ${h}`} aria-hidden="true">
        {body}
        {d.sel && <path d="M-1 0C13 3 22-2 38 0S66 6 81 1V27C66 31 54 28 40 26S14 30-1 28z" fill="none" stroke="#a8808c" strokeWidth="1.500" />}
        <g stroke={d.kind === 'copy' ? '#8b5a14' : '#8d8d8d'}>
          <path d={d.kind === 'copy' ? 'M13 1L10 24M25 1L21 24' : 'M12 3L9 23M24 3L21 23M60 3L57 24M72 3L69 24'} />
        </g>
        {nodeArt[d.icon]}
        {[...d.top, d.bottom].map(([x, y]) => <circle key={`${x}${y}`} cx={x} cy={y} r="4" fill={d.kind === 'copy' ? '#cdb6ea' : '#cfcfcf'} />)}
      </NodeBody>
      <NodeText>
        {d.name}
        {d.ring && (
          <Badges>
            <svg width="11" height="11" viewBox="0 0 11 11" aria-hidden="true"><circle cx="5.500" cy="5.500" r="4" fill="#1c1c1c" stroke={d.ring} strokeWidth="1.500" /><path d="M5.500 3v3" stroke="#ddd" /></svg>
            {d.lock && <svg width="10" height="11" viewBox="0 0 10 11" aria-hidden="true"><path d="M0 5h10v6H0z" fill="#666" /><path d="M2 5V3c0-3 6-3 6 0v2" fill="none" stroke="#666" strokeWidth="1.500" /></svg>}
          </Badges>
        )}
      </NodeText>
    </NodeBox>
  );
};

/* ---------- timeline ---------- */

const TimePanel = styled.section`
  display: grid;
  grid-template-columns: 135px minmax(0, 1362fr) 84px 61px;
  height: 68px;
  border-top: 2px solid #4a4a4a;
  border-bottom: 2px solid #0c0c0c;
  background: #2d2d2d;
`;
const Transport = styled.div`
  display: flex;
  flex-direction: column;
  gap: 7px;
  padding: 6px 0 0 4px;
`;
const TRow = styled.div`
  display: flex;
  align-items: stretch;
  height: 25px;
  gap: 2px;
`;
const TButton = styled.button<{ w: number; $on?: boolean }>`
  display: grid;
  place-items: center;
  width: ${p => p.w}px;
  min-height: 24px;
  background: ${p => (p.$on ? '#6480a5' : '#404040')};
`;
const Num = styled.input<{ w: number; $flat?: boolean }>`
  width: ${p => p.w}px;
  min-height: 22px;
  padding-left: 3px;
  background: ${p => (p.$flat ? '#252525' : '#171717')};
  color: #dcdcdc;
  font-size: 12px;
`;
const Track = styled.div`
  display: flex;
  flex-direction: column;
  min-width: 0;
`;
const Ruler = styled.div`
  position: relative;
  display: flex;
  height: 39px;
`;
const Segment = styled.div<{ $n: number }>`
  flex: ${p => p.$n} 1 0;
  min-width: 0;
  font-size: 9px;
  line-height: 11px;
  color: #989898;
  white-space: nowrap;
  &::before {
    content: "";
    display: inline-block;
    height: 11px;
    vertical-align: top;
  }
  &::after {
    content: "";
    display: block;
    height: 19px;
    background:
      linear-gradient(#b4c4d4, #b4c4d4) 0 4px / 1px 15px no-repeat,
      linear-gradient(#1465be 0 8px, #6789a9 8px 11px, transparent 11px) 0 0 / 100% 100%,
      linear-gradient(90deg, #555 1px, transparent 1px) 0 10px / ${p => (p.$n > 2 ? '25%' : '100%')} 5px repeat-x;
  }
`;
const Playhead = styled.output`
  position: absolute;
  left: ${(52 / 240) * 100}%;
  top: 1px;
  display: grid;
  place-items: center;
  width: 24px;
  height: 18px;
  margin-left: -12px;
  border: 1px solid #f0f0f0;
  background: #0b0b0b;
  color: #f0f0f0;
  font-size: 11px;
  line-height: 14px;
  &::after {
    content: "";
    position: absolute;
    top: 16px;
    left: 6px;
    width: 10px;
    height: 5px;
    background: #d0d8e0;
    clip-path: polygon(0 0, 100% 0, 50% 100%);
  }
`;
const RangeRow = styled.div`
  display: flex;
  align-items: center;
  height: 22px;
  gap: 3px;
`;
const RangeBox = styled.div`
  flex: 1;
  display: grid;
  align-items: center;
  height: 14px;
  background: linear-gradient(#858585, #858585) center / calc(100% - 12px) 2px no-repeat;
`;
const RangeInput = styled.input<{ $end?: boolean }>`
  grid-area: 1 / 1;
  appearance: none;
  width: 100%;
  height: 14px;
  pointer-events: none;
  &::-webkit-slider-thumb {
    appearance: none;
    pointer-events: auto;
    width: 7px;
    height: 12px;
    background: #b9b9b9;
    clip-path: ${p => (p.$end ? 'polygon(100% 0, 100% 100%, 0 50%)' : 'polygon(0 0, 100% 50%, 0 100%)')};
  }
`;
const KeyTools = styled.div`
  display: flex;
  flex-direction: column;
  align-items: flex-end;
  gap: 4px;
  padding: 6px 3px 0 0;
`;
const KeyTexts = styled(KeyTools)`
  align-items: stretch;
  padding: 6px 0 0 4px;
  overflow: hidden;
`;
const KeyButton = styled.button`
  height: 24px;
  padding-left: 13px;
  background: #3f3f3f;
  font-size: 11px;
  line-height: 22px;
  text-align: left;
  white-space: nowrap;
`;
const StatusBar = styled.div`
  display: flex;
  align-items: flex-start;
  justify-content: flex-end;
  height: 24px;
  background: #1a1a1a;
  font-size: 11px;
`;
const StatusTools = styled.div`
  display: flex;
  align-items: center;
  width: 192px;
  height: 21px;
  background: #333;
`;
const CookButton = styled.button`
  flex: none;
  width: 100px;
  height: 20px;
  padding-left: 15px;
  background: #444;
  text-align: left;
  line-height: 18px;
`;

/* ---------- taskbar ---------- */

const Taskbar = styled.footer`
  display: flex;
  align-items: stretch;
  height: 38px;
  background: linear-gradient(90deg, #ececec 0 44%, #e2e3e3 48%, #d6dbdc 53%, #d4dde2 56%, #e4ecea 59%, #ececec 61%);
  color: #222;
`;
const SearchBox = styled.div`
  display: flex;
  align-items: center;
  justify-content: space-between;
  width: 231px;
  padding-right: 6px;
  background: #fcfcfc;
  border-right: 1px solid #d0d0d0;
`;
const SearchInput = styled.input`
  width: 40px;
  margin-left: -2px;
  font-size: 12px;
  color: #222;
  &::placeholder { color: #222; opacity: 1; }
`;
const TaskButton = styled.button<{ w: number; $bar?: string; $bg?: string }>`
  display: grid;
  place-items: center;
  width: ${p => p.w}px;
  padding-bottom: 2px;
  background: ${p => p.$bg ?? 'none'};
  box-shadow: ${p => (p.$bar ? `inset 0 -2px ${p.$bar}` : 'none')};
`;
const Tray = styled.div`
  display: flex;
  align-items: center;
  gap: 7px;
  width: 216px;
  font-size: 13px;
`;
const InputMode = styled.button`
  flex: none;
  width: 20px;
  text-align: center;
`;
const Clock = styled.time`
  flex: none;
  display: flex;
  flex-direction: column;
  align-items: flex-end;
  margin-left: 4px;
  width: 25px;
  font-size: 11px;
  line-height: 18px;
`;

/* ---------- overlays ---------- */

const Watermark = styled.div`
  position: absolute;
  left: 500px;
  top: 502px;
  font: 700 97px/140px ${ui};
  white-space: pre;
  color: rgba(150, 150, 150, 0.07);
  -webkit-text-stroke: 1px rgba(70, 78, 82, 0.42);
  pointer-events: none;
`;
const Activate = styled.div`
  position: absolute;
  right: 0;
  bottom: 84px;
  width: 181px;
  color: rgba(215, 215, 215, 0.5);
  font-size: 14px;
  line-height: 22px;
  white-space: nowrap;
  pointer-events: none;
  strong { display: block; font-size: 20px; line-height: 25px; font-weight: 400; }
`;

const ShelfView = ({ tabs, tools, start, on }: { tabs: [string, number][]; tools: [string, string, number][]; start: number; on?: boolean }) => (
  <Shelf>
    <ShelfTabs $start={start}>
      {tabs.map(([t, w], i) => <ShelfTab key={t} w={w} $on={on && i === 0}>{t}</ShelfTab>)}
      <IconCell w={24} aria-label="Add shelf"><Icon n="plus" s={10} /></IconCell>
      {!on && <><Gap /><IconCell w={18} aria-label="Shelf menu"><Icon n="downbig" s={6} /></IconCell></>}
    </ShelfTabs>
    <ShelfTools $start={start}>
      {tools.map(([t, ic, w]) => (
        <Tool key={t} w={w}><Icon n={ic} s={18} /><ToolName>{t}</ToolName></Tool>
      ))}
      {!on && <MoreTools aria-label="More tools"><Icon n="right" s={9} /></MoreTools>}
    </ShelfTools>
  </Shelf>
);

const Tab = ({ t, w, on, it }: { t: string; w: number; on?: boolean; it?: boolean }) => (
  <PaneTab w={w} $on={on}><TabName $it={it}>{t}</TabName><CloseX aria-label={`Close ${t}`}>×</CloseX></PaneTab>
);

export default function App() {
  return (
    <Page>
      <Global />
      <TitleBar>
        <span>493/Desktop/让模拟的粒子平稳落地.hip - Houdini FX 19.5.605 - Py3.9</span>
        <MinButton aria-label="Minimize" />
      </TitleBar>
      <MenuBar>
        <CutMenu>
          {['渲染', '资产', '窗口', 'Labs', '帮助'].map(m => <MenuButton key={m}>{m}</MenuButton>)}
        </CutMenu>
        <Gap w={23} />
        <DeskPicker w={100}><Icon n="layout" s={14} /><PickSelect aria-label="Desktop"><option>Build</option></PickSelect></DeskPicker>
        <IconCell w={22} aria-label="Cycle desktop"><Icon n="updown" s={12} /></IconCell>
        <Gap w={3} />
        <DeskPicker w={100}><Icon n="target" s={14} /><PickSelect aria-label="Radial menu"><option>主要</option></PickSelect></DeskPicker>
        <IconCell w={22} aria-label="Cycle radial menu"><Icon n="updown" s={12} /></IconCell>
        <Gap />
        <DeskPicker w={100}><Icon n="anim" s={14} /><PickSelect aria-label="Take"><option>Main</option></PickSelect></DeskPicker>
      </MenuBar>
      <Shelves>
        <ShelfView tabs={leftTabs} tools={leftTools} start={-19} />
        <Grip />
        <ShelfView tabs={rightTabs} tools={rightTools} start={22} on />
      </Shelves>
      <Panes>
        <Pane>
          <PaneTabs>
            <PaneTab w={17} $cut><CloseX aria-label="Close tab">×</CloseX></PaneTab>
            <Tab t="Render View" w={85} />
            <Tab t="Composite View" w={96} />
            <Tab t="Motion FX View" w={93} />
            <Tab t="Geometry Spreadsheet" w={123} />
            <Tab t="Scene View" w={79} on />
            <IconCell w={28} aria-label="New tab"><Icon n="plus" s={10} /></IconCell>
            <Gap />
            <IconCell w={18} aria-label="Maximize pane"><Icon n="box" s={10} /></IconCell>
            <IconCell w={16} aria-label="Pane menu"><Icon n="downbig" s={6} /></IconCell>
          </PaneTabs>
          <PathBar>
            <PathField>
              <PathPart w={12}>obj</PathPart>
              <Chevron />
              <PathPart w={42}><Icon n="geo" />geo1</PathPart>
              <Gap />
              <DropBox aria-label="Path history"><Icon n="down" s={7} /></DropBox>
            </PathField>
            <Gap w={6} />
            <IconCell w={24} aria-label="Pin"><Icon n="pin" s={14} /></IconCell>
            <IconCell w={22} aria-label="Link"><Icon n="rings" s={17} /></IconCell>
            <Gap w={8} />
            <IconCell w={24} aria-label="Shading"><Icon n="cube" /></IconCell>
            <IconCell w={24} aria-label="Light"><Icon n="bluedot" /></IconCell>
            <IconCell w={22} aria-label="Background"><Icon n="square" /></IconCell>
          </PathBar>
          <ViewTools>
            <Gap w={231} />
            <IconCell w={32} aria-label="Select"><Icon n="sel" s={18} /></IconCell>
            <IconCell w={32} aria-label="Lasso"><Icon n="sel2" s={18} /></IconCell>
            <IconCell w={34} aria-label="Move"><Icon n="sel3" s={18} /></IconCell>
            <IconCell w={22} $on aria-label="Snap"><Icon n="snap" /></IconCell>
            <IconCell w={26} aria-label="Magnet"><Icon n="magnet" s={12} /></IconCell>
            <Sep />
            <IconCell w={32} aria-label="Construction plane"><Icon n="dim" s={14} /></IconCell>
            <Sep />
            <IconCell w={28} aria-label="Visibility"><Icon n="eye" s={15} /></IconCell>
            <IconCell w={20} aria-label="Options"><Icon n="gear" s={15} /></IconCell>
            <Gap />
            <IconCell w={24} aria-label="Display"><Icon n="people" s={17} /></IconCell>
            <IconCell w={24} aria-label="Help"><Icon n="help" s={14} /></IconCell>
          </ViewTools>
          <SceneRow>
            <Scene>
              <SceneDrawing />
              <CamMenus>
                <CamButton>Persp<Icon n="downbig" s={6} /></CamButton>
                <CamButton>No cam<Icon n="downbig" s={6} /></CamButton>
              </CamMenus>
              <Cursor><Icon n="hand" s={16} /></Cursor>
              <Hint>{'se tumbles. Middle pans. Right dollies. Ctrl+Alt+Left box-zooms. Ctrl+Right zooms. Spacebar-Ctrl-Left tilts. Hold L for alternate tumble, dolly, and zoom.     M\nfor First Person Navigation.'}</Hint>
            </Scene>
            <SideBar>
              <SideTop aria-label="Collapse"><Icon n="flag" s={8} /></SideTop>
              {sideIcons.map(([n, on], i) => (
                <SideButton key={i} $on={on} aria-label={n}>{shapes[n] ? <Icon n={n} /> : n}</SideButton>
              ))}
              <SideButton $on $gap={11} aria-label="marker"><Icon n="marker" /></SideButton>
              <SideButton $gap={6} aria-label="info"><Icon n="info" s={14} /></SideButton>
              <SideButton aria-label="More"><Icon n="more" s={14} /></SideButton>
            </SideBar>
          </SceneRow>
        </Pane>
        <Splitter />
        <Pane>
          <PaneTabs>
            <Tab t="/obj/geo1" w={72} on it />
            <Tab t="Tree View" w={73} />
            <Tab t="Material Palette" w={97} />
            <Tab t="Asset Browser" w={88} />
            <IconCell w={28} aria-label="New tab"><Icon n="plus" s={10} /></IconCell>
          </PaneTabs>
          <PathBar>
            <IconCell w={24} aria-label="Back"><Icon n="back" s={15} /></IconCell>
            <IconCell w={24} aria-label="Forward"><Icon n="fwd" s={13} /></IconCell>
            <Gap w={3} />
            <PathField>
              <PathPart w={42}><Icon n="obj" s={14} />obj</PathPart>
              <Chevron />
              <PathPart w={43}><Icon n="geo" />geo1</PathPart>
            </PathField>
          </PathBar>
          <NetMenu>
            {['添加', '编辑', '前往', '视图', '工具', '布局', 'Labs', '帮助'].map(m => <MenuButton key={m}>{m}</MenuButton>)}
            <Gap />
            <Icon n="wrench" s={14} /><Icon n="tree" s={14} /><Icon n="list" s={14} /><Gap w={6} />
            <Icon n="palette" s={14} /><Icon n="table" s={14} /><Gap w={6} />
            <Icon n="netbox" s={14} /><Icon n="note" s={14} /><Icon n="image" s={14} />
          </NetMenu>
          <Network>
            <Wires width="872" height="720" viewBox="0 0 872 720" aria-hidden="true">
              <g fill="none" stroke="#587794" strokeWidth="1.200">
                <path d="M414 0L548 373" />
                <path d="M714 0L691 212" />
                <path d="M818 42Q818 49 812 58L712 200Q707 207 707 214" />
                <path d="M714 260Q713 270 705 276L584 358Q573 364 572 374" />
                <path d="M276 412Q277 420 286 429L334 474Q345 482 347 492" />
                <path d="M560 425Q564 440 582 448L652 480Q670 488 671 500" />
                <path d="M560 425Q558 440 540 444L400 472Q384 474 381 490" stroke="#9a9a8c" strokeDasharray="1.500 2.500" />
              </g>
            </Wires>
            {nodes.map(d => <NodeView key={d.name} d={d} />)}
          </Network>
        </Pane>
      </Panes>
      <TimePanel>
        <Transport>
          <TRow>
            <TButton w={24} $on aria-label="Pause"><Icon n="pause" /></TButton>
            <TButton w={24} aria-label="Last frame"><Icon n="next" s={18} /></TButton>
            <Num w={46} aria-label="Current frame" defaultValue="54" />
            <TButton w={12} aria-label="Step back"><Icon n="stepb" s={11} /></TButton>
            <TButton w={12} aria-label="Step forward"><Icon n="stepf" s={11} /></TButton>
          </TRow>
          <TRow>
            <TButton w={24} $on aria-label="Real time"><Icon n="clock" /></TButton>
            <TButton w={24} aria-label="Frame range"><Icon n="keys" s={18} /></TButton>
            <Gap w={2} />
            <TButton w={20} aria-label="Previous key"><Icon n="keydim" s={14} /></TButton>
            <TButton w={20} aria-label="Next key"><Icon n="keydim" s={14} /></TButton>
          </TRow>
        </Transport>
        <Track>
          <Ruler>
            {['1', '24', '48', '72', '96', '120', '144', '168', '192', '216', ''].map((t, i) => (
              <Segment key={i} $n={i === 0 ? 23 : i === 10 ? 1 : 24}>{t}</Segment>
            ))}
            <Playhead>53</Playhead>
          </Ruler>
          <RangeRow>
            <Num w={40} $flat aria-label="Start frame" defaultValue="1" />
            <Num w={40} aria-label="Range start" defaultValue="1" />
            <RangeBox>
              <RangeInput type="range" min={1} max={240} defaultValue={1} aria-label="Playback start" />
              <RangeInput type="range" min={1} max={240} defaultValue={240} aria-label="Playback end" $end />
            </RangeBox>
            <Num w={40} aria-label="Range end" defaultValue="240" />
            <Num w={40} $flat aria-label="End frame" defaultValue="240" />
          </RangeRow>
        </Track>
        <KeyTools>
          <TButton w={20} aria-label="Set key"><Icon n="keyset" s={16} /></TButton>
          <TButton w={20} aria-label="Scope"><Icon n="scope" s={16} /></TButton>
        </KeyTools>
        <KeyTexts>
          <KeyButton>0 keys, 0/0 channels</KeyButton>
          <KeyButton>Key All Channels</KeyButton>
        </KeyTexts>
      </TimePanel>
      <StatusBar>
        <StatusTools>
          <IconCell w={26} aria-label="Messages"><Icon n="bubble" /></IconCell>
          <CookButton>/obj/geo1/pop...</CookButton>
          <IconCell w={22} aria-label="Cycle update"><Icon n="updown" s={11} /></IconCell>
          <IconCell w={28} aria-label="Recook"><Icon n="refresh" s={14} /></IconCell>
          <CookButton aria-label="Update mode" />
        </StatusTools>
      </StatusBar>
      <Taskbar>
        <SearchBox>
          <SearchInput aria-label="搜索" placeholder="搜索" />
          <svg width="64" height="26" viewBox="0 0 64 26" aria-hidden="true">
            <ellipse cx="33" cy="14" rx="30" ry="9" fill="#d8d3e6" />
            <path d="M2 11c12-2 28-2 56 4-8 8-44 14-56-4z" fill="#d9974a" />
            <path d="M26 10l16-8 14 10-16 8z" fill="#e7b877" />
            <path d="M16 8c4-5 10-4 12 0l2 7-8 4-8-4z" fill="#cf3b35" />
            <path d="M8 16c14 8 30 8 44 2" stroke="#9c4a27" strokeWidth="2" fill="none" />
            <path d="M36 16c6-4 10-3 12 1M20 7l4 3 3-5" stroke="#b5543a" strokeWidth="2" fill="none" />
          </svg>
        </SearchBox>
        <TaskButton w={46} aria-label="Task view"><Icon n="taskview" s={18} /></TaskButton>
        <Gap w={5} />
        <TaskButton w={39} $bar="#2272b9" aria-label="Edge"><Icon n="edge" s={24} /></TaskButton>
        <Gap w={5} />
        <TaskButton w={46} $bg="#fbb374" $bar="#ee7b1c" aria-label="Files"><Icon n="folder" s={22} /></TaskButton>
        <Gap w={4} />
        <TaskButton w={38} $bar="#2272b9" aria-label="Chrome"><Icon n="chrome" s={23} /></TaskButton>
        <TaskButton w={54} aria-label="Obsidian"><Icon n="gem" s={20} /></TaskButton>
        <TaskButton w={40} aria-label="Copyright"><Icon n="cring" s={18} /></TaskButton>
        <TaskButton w={54} aria-label="Bird"><Icon n="bird" s={23} /></TaskButton>
        <TaskButton w={42} aria-label="Cloud"><Icon n="swirl" s={20} /></TaskButton>
        <TaskButton w={46} $bg="#f6f6f6" $bar="#2272b9" aria-label="Houdini"><Icon n="houdini" s={23} /></TaskButton>
        <Gap w={5} />
        <TaskButton w={38} $bar="#2272b9" aria-label="Recorder"><Icon n="rec" s={23} /></TaskButton>
        <Gap />
        <Tray>
          <Icon n="news" s={24} />
          <Gap w={10} />
          <Icon n="chevup" s={12} />
          <Icon n="penguin" s={17} />
          <Icon n="monitor" />
          <Icon n="speaker" />
          <InputMode>英</InputMode>
          <Icon n="sogou" />
          <Clock><span>2</span><span>2023</span></Clock>
        </Tray>
      </Taskbar>
      <Watermark>CG资源网 水印</Watermark>
      <Activate><strong>激活 Windows</strong>转到"设置"以激活 Windows</Activate>
    </Page>
  );
}
